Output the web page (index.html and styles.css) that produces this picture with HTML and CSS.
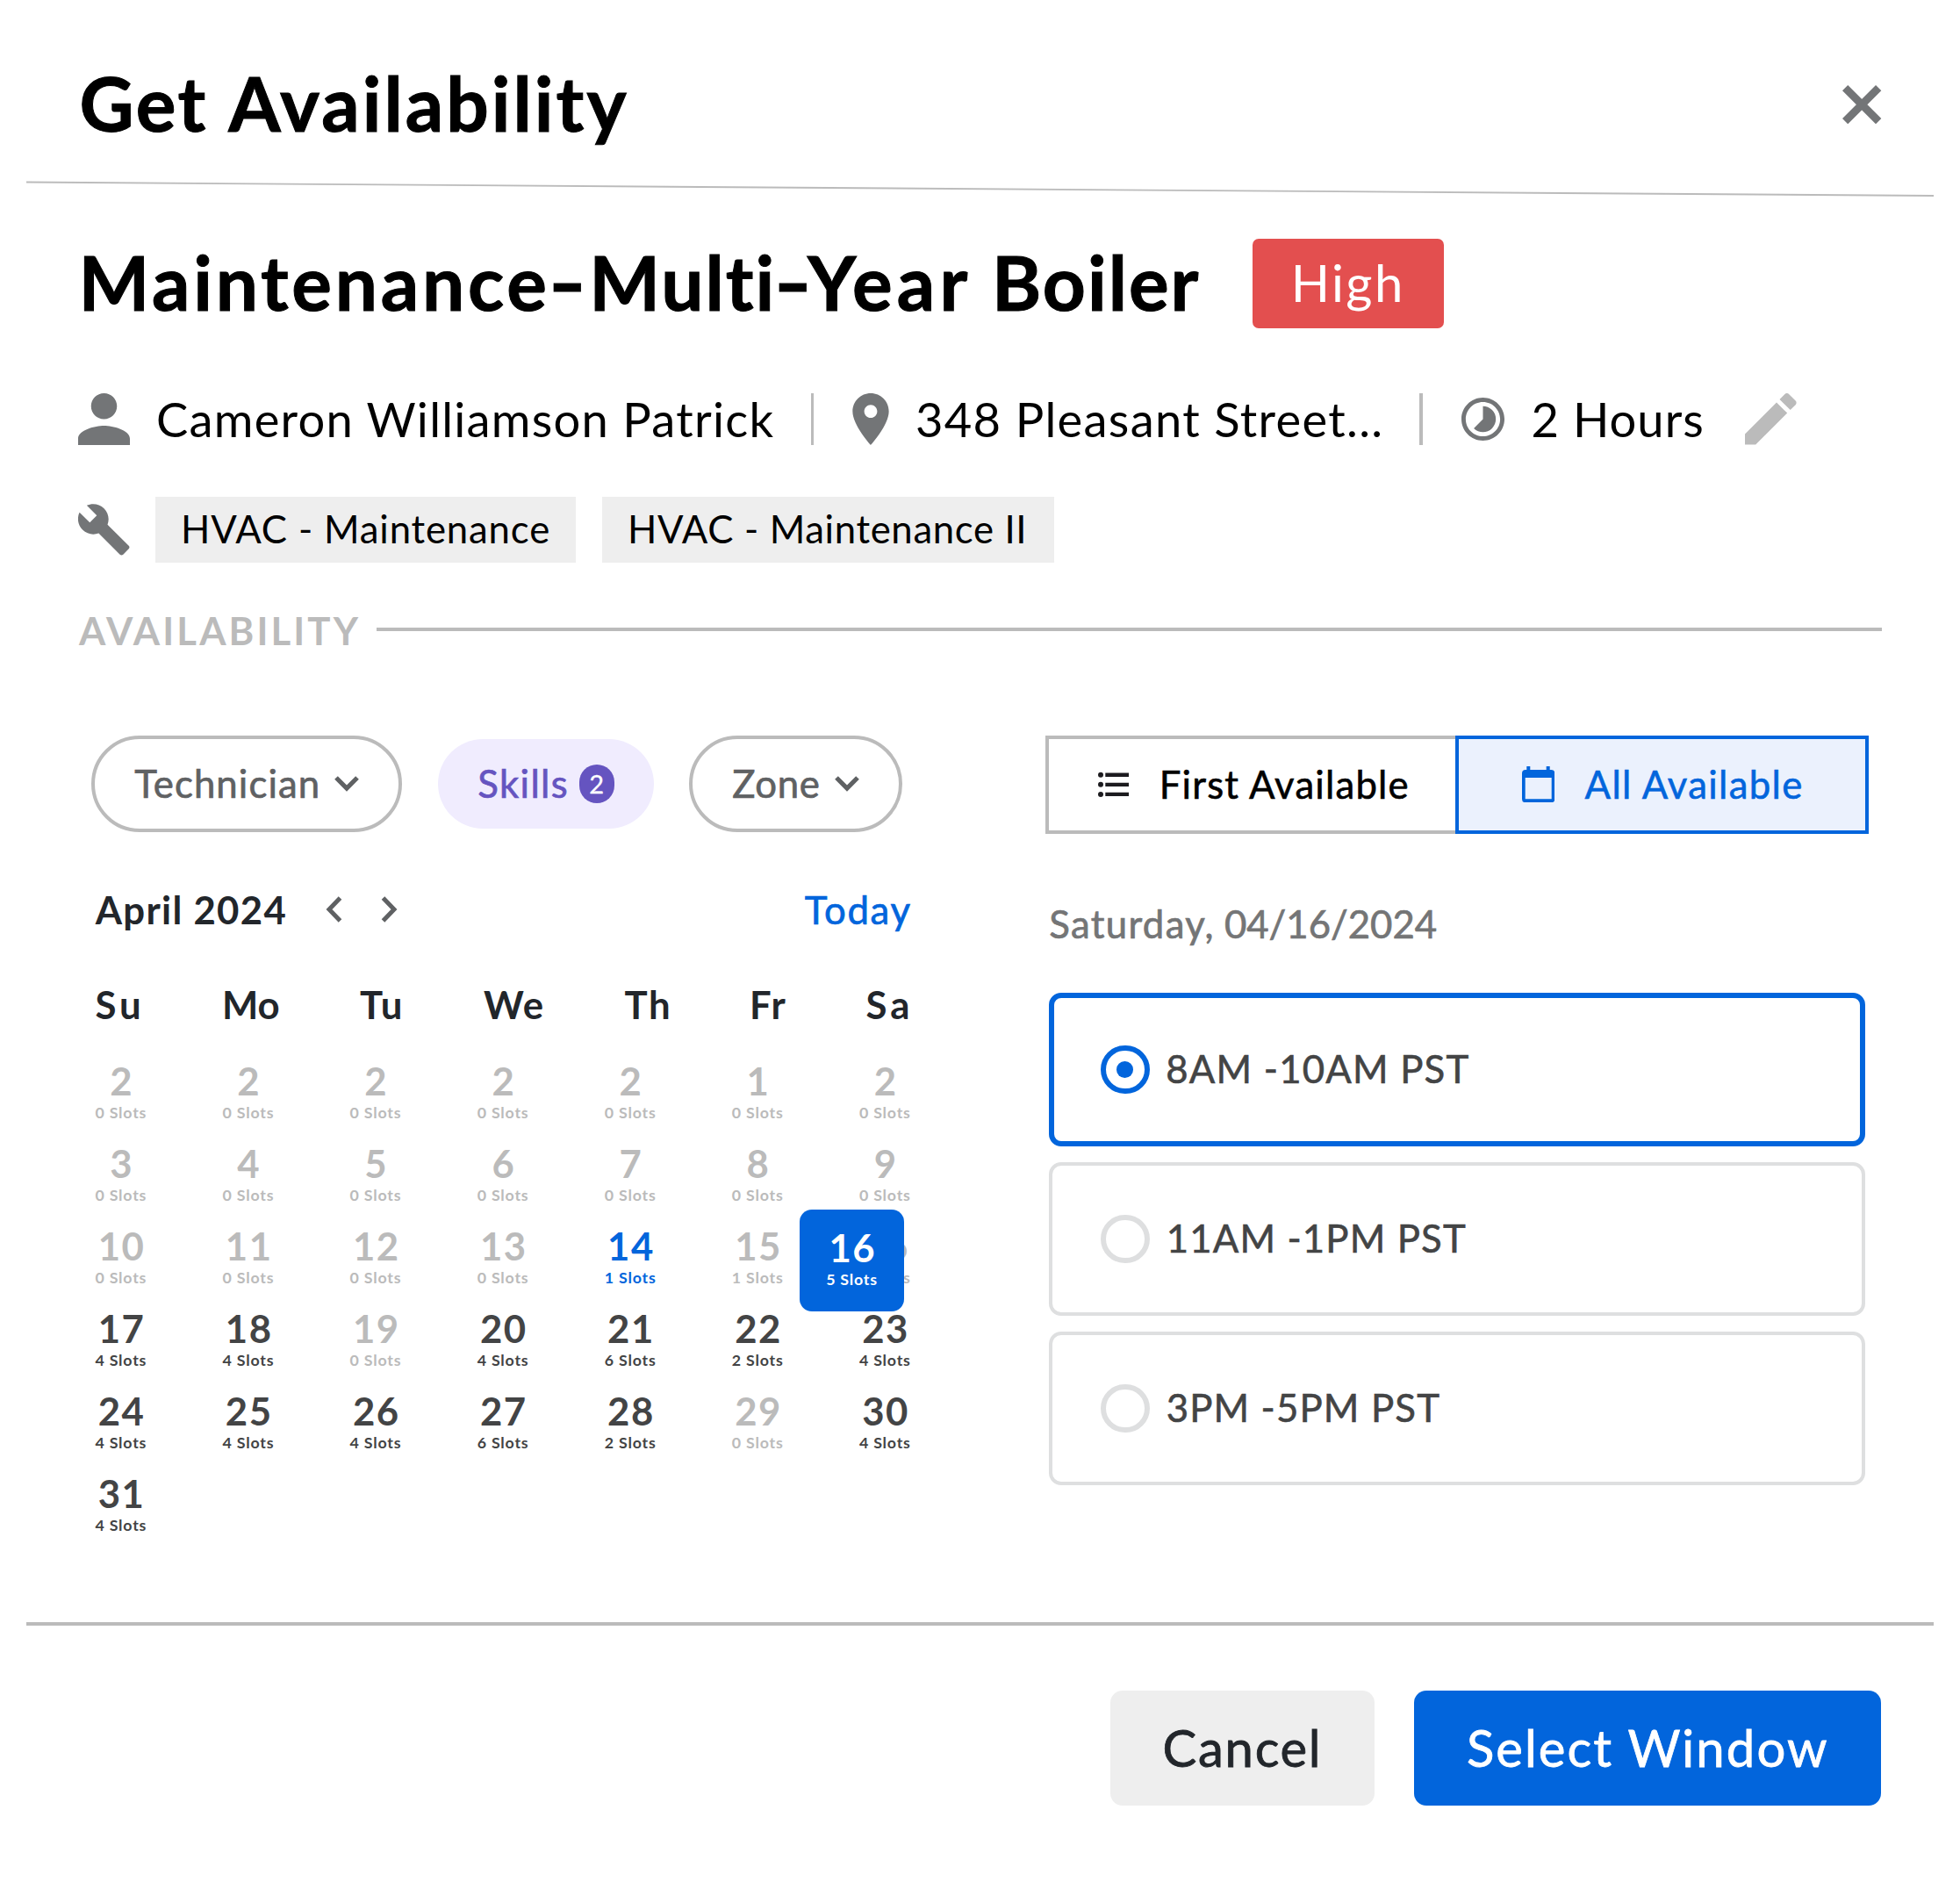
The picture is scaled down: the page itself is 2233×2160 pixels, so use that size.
FILE: index.html
```html
<!DOCTYPE html>
<html lang="en">
<head>
<meta charset="utf-8">
<title>Get Availability</title>
<link rel="stylesheet" href="styles.css">
</head>
<body>
<div class="dialog">
  <header class="dialog-head">
    <h1 class="title">Get <span class="t-avail">Availability</span></h1>
    <svg class="close" viewBox="0 0 44 44"><path d="M3.1 3.1l37.8 37.8M40.9 3.1L3.1 40.9" stroke="#737577" stroke-width="8.8"/></svg>
  </header>
  <svg class="head-rule" viewBox="0 0 2173 18"><path d="M0 1.5L2173 17" stroke="#bbb" stroke-width="1.9"/></svg>

  <section class="job">
    <div class="job-title">
      <h2 class="job-name">Maintenance<span class="hyphen">-</span><span class="n-multi">Multi</span><span class="hyphen before-year">-</span><span class="n-year">Year</span> <span class="n-boiler">Boiler</span></h2>
      <span class="priority">High</span>
    </div>
    <div class="meta">
      <svg class="i-person" viewBox="4 4 16 16"><path d="M12 12c2.21 0 4-1.79 4-4s-1.79-4-4-4-4 1.79-4 4 1.79 4 4 4zm0 2c-2.67 0-8 1.34-8 4v2h16v-2c0-2.66-5.33-4-8-4z"/></svg>
      <span class="meta-text customer">Cameron Williamson Patrick</span>
      <i class="bar"></i>
      <svg class="i-pin" viewBox="5 2 14 20"><path d="M12 2C8.13 2 5 5.13 5 9c0 5.25 7 13 7 13s7-7.75 7-13c0-3.87-3.13-7-7-7zm0 9.5c-1.38 0-2.5-1.12-2.5-2.5s1.12-2.5 2.5-2.5 2.5 1.12 2.5 2.5-1.12 2.5-2.5 2.5z"/></svg>
      <span class="meta-text address">348 Pleasant Street...</span>
      <i class="bar"></i>
      <svg class="i-clock" viewBox="2 2 20 20"><path d="M16.24 7.76C15.07 6.59 13.54 6 12 6v6l-4.24 4.24c2.34 2.34 6.14 2.34 8.49 0 2.34-2.34 2.34-6.14-.01-8.48zM12 2C6.48 2 2 6.48 2 12s4.48 10 10 10 10-4.48 10-10S17.52 2 12 2zm0 18c-4.42 0-8-3.58-8-8s3.58-8 8-8 8 3.58 8 8-3.58 8-8 8z"/></svg>
      <span class="meta-text hours">2 Hours</span>
      <svg class="i-edit" viewBox="3 3 18 18"><path d="M3 17.25V21h3.75L17.81 9.94l-3.75-3.75L3 17.25zM20.71 7.04c.39-.39.39-1.02 0-1.41l-2.34-2.34c-.39-.39-1.02-.39-1.41 0l-1.83 1.83 3.75 3.75 1.83-1.83z"/></svg>
    </div>
    <div class="skills">
      <svg class="i-wrench" viewBox="1 1 22 22"><path d="M22.7 19l-9.1-9.1c.9-2.3.4-5-1.5-6.9-2-2-5-2.4-7.4-1.3L9 6 6 9 1.6 4.7C.4 7.1.9 10.1 2.9 12.1c1.9 1.9 4.6 2.4 6.9 1.5l9.1 9.1c.4.4 1 .4 1.4 0l2.3-2.3c.5-.4.5-1.1.1-1.4z"/></svg>
      <span class="chip chip-a">HVAC - Maintenance</span>
      <span class="chip chip-b">HVAC - Maintenance II</span>
    </div>
    <div class="section-label"><span class="label-text">AVAILABILITY</span><i class="label-rule"></i></div>
  </section>

  <main class="columns">
    <section class="left">
      <div class="filters">
        <div class="pill technician"><span class="pill-text">Technician</span><svg class="chev" viewBox="0 0 30 20"><path d="M3 4l12 12L27 4"/></svg></div>
        <div class="pill-on"><span class="pill-text skills-text">Skills</span><span class="count">2</span></div>
        <div class="pill zone"><span class="pill-text">Zone</span><svg class="chev" viewBox="0 0 30 20"><path d="M3 4l12 12L27 4"/></svg></div>
      </div>
      <div class="month">
        <span class="month-name">April 2024</span>
        <svg class="nav" viewBox="0 0 19 30"><path d="M16.5 2L4 15l12.5 13"/></svg>
        <svg class="nav" viewBox="0 0 19 30"><path d="M2.5 2L15 15 2.5 28"/></svg>
        <span class="today">Today</span>
      </div>
      <div class="weekdays"><span class="wide">Su</span><span class="tight">Mo</span><span>Tu</span><span>We</span><span>Th</span><span>Fr</span><span class="wide">Sa</span></div>
      <div class="days">
        <div class="day"><b>2</b><small>0 Slots</small></div>
        <div class="day"><b>2</b><small>0 Slots</small></div>
        <div class="day"><b>2</b><small>0 Slots</small></div>
        <div class="day"><b>2</b><small>0 Slots</small></div>
        <div class="day"><b>2</b><small>0 Slots</small></div>
        <div class="day"><b>1</b><small>0 Slots</small></div>
        <div class="day"><b>2</b><small>0 Slots</small></div>
        <div class="day"><b>3</b><small>0 Slots</small></div>
        <div class="day"><b>4</b><small>0 Slots</small></div>
        <div class="day"><b>5</b><small>0 Slots</small></div>
        <div class="day"><b>6</b><small>0 Slots</small></div>
        <div class="day"><b>7</b><small>0 Slots</small></div>
        <div class="day"><b>8</b><small>0 Slots</small></div>
        <div class="day"><b>9</b><small>0 Slots</small></div>
        <div class="day"><b>10</b><small>0 Slots</small></div>
        <div class="day"><b>11</b><small>0 Slots</small></div>
        <div class="day"><b>12</b><small>0 Slots</small></div>
        <div class="day"><b>13</b><small>0 Slots</small></div>
        <div class="day now"><b>14</b><small>1 Slots</small></div>
        <div class="day"><b>15</b><small>1 Slots</small></div>
        <div class="day"><b>16</b><small>5 Slots</small><div class="picked"><b>16</b><small>5 Slots</small></div></div>
        <div class="day open"><b>17</b><small>4 Slots</small></div>
        <div class="day open"><b>18</b><small>4 Slots</small></div>
        <div class="day"><b>19</b><small>0 Slots</small></div>
        <div class="day open"><b>20</b><small>4 Slots</small></div>
        <div class="day open"><b>21</b><small>6 Slots</small></div>
        <div class="day open"><b>22</b><small>2 Slots</small></div>
        <div class="day open"><b>23</b><small>4 Slots</small></div>
        <div class="day open"><b>24</b><small>4 Slots</small></div>
        <div class="day open"><b>25</b><small>4 Slots</small></div>
        <div class="day open"><b>26</b><small>4 Slots</small></div>
        <div class="day open"><b>27</b><small>6 Slots</small></div>
        <div class="day open"><b>28</b><small>2 Slots</small></div>
        <div class="day"><b>29</b><small>0 Slots</small></div>
        <div class="day open"><b>30</b><small>4 Slots</small></div>
        <div class="day open"><b>31</b><small>4 Slots</small></div>
      </div>
    </section>

    <section class="right">
      <div class="toggle">
        <div class="tab first">
          <svg class="i-list" viewBox="0 0 35 30"><g fill="#1c1b1f"><circle cx="3" cy="3.7" r="3"/><circle cx="3" cy="14.8" r="3"/><circle cx="3" cy="25.9" r="3"/><path d="M8.3 1.6h26.7v4.3h-26.7zM8.3 12.7h26.7v4.3h-26.7zM8.3 23.8h26.7v4.3h-26.7z"/></g></svg>
          <span>First Available</span>
        </div>
        <div class="tab all">
          <svg class="i-cal" viewBox="0 0 37.3 41.3"><path fill="#0265dc" fill-rule="evenodd" d="M5.3 0h4v4h18.4v-4h4v4h1.6a4 4 0 0 1 4 4v29.3a4 4 0 0 1-4 4h-29.3a4 4 0 0 1-4-4v-29.3a4 4 0 0 1 4-4h1.3zM3.7 13v24.3h30v-24.3z"/></svg>
          <span>All Available</span>
        </div>
      </div>
      <p class="date"><span class="date-day">Saturday,</span> 04/16/2024</p>
      <div class="windows">
        <div class="window on"><i class="radio"></i><span class="w1">8AM -10AM PST</span></div>
        <div class="window"><i class="radio"></i><span class="w2">11AM -1PM PST</span></div>
        <div class="window"><i class="radio"></i><span class="w3">3PM -5PM PST</span></div>
      </div>
    </section>
  </main>

  <footer class="actions">
    <div class="btn cancel">Cancel</div>
    <div class="btn select">Select Window</div>
  </footer>
</div>
</body>
</html>
```
FILE: styles.css
```css
* { box-sizing: border-box; }
body { margin: 0; background: #fff; color: #000; font: 400 43.7px/50px Lato, "Noto Sans", sans-serif; }
svg { display: block; flex: none; fill: none; }
h1, h2, p { margin: 0; font-weight: 700; }
i { display: block; }
.dialog { width: 2233px; height: 2160px; overflow: hidden; white-space: nowrap; }

.dialog-head { display: flex; justify-content: space-between; align-items: center; height: 206px; padding: 26px 89.5px 0 90.5px; }
.title { padding-top: 1px; font-size: 85.5px; line-height: 100px; letter-spacing: 2.6px; -webkit-text-stroke: 1px; }
.t-avail { letter-spacing: 3.05px; }
.close { width: 44.3px; height: 44.3px; margin-top: 6px; }
.head-rule { width: 2173px; height: 18px; margin-left: 30px; }

.job { padding: 48.3px 89.3px 0 89px; }
.job-title { display: flex; align-items: center; height: 101.4px; }
.job-name { width: 1338.3px; padding-bottom: 4.5px; margin-left: .5px; margin-right: -.5px; font-size: 85.5px; line-height: 98px; letter-spacing: 3.79px; -webkit-text-stroke: 1px; }
.hyphen { display: inline-block; margin: 0 5px 0 4px; transform: scaleX(1.35); }
.before-year { margin-right: -4px; }
.n-multi { letter-spacing: 2px; }
.n-year { letter-spacing: 5.2px; }
.n-boiler { margin-left: -2px; letter-spacing: 2px; }
.priority { width: 217.7px; height: 101.4px; padding: 0 0 0 43.5px; border-radius: 7px; background: #e34f4f; color: #fff; font-size: 58px; line-height: 100px; letter-spacing: 2.4px; }

.meta { display: grid; grid-template-columns: 89px 745.5px 47.7px 71.8px 574.5px 47.5px 79.5px 243.5px 58.6px; align-items: center; height: 59px; margin-top: 74.3px; font-size: 54.3px; line-height: 56px; }
.meta-text { padding-bottom: 1px; }
.customer { letter-spacing: 1.26px; }
.address { letter-spacing: 1.32px; }
.hours { letter-spacing: 1.02px; }
.bar { width: 3.6px; height: 59px; background: #bbb; }
.i-person, .i-pin, .i-clock, .i-wrench { fill: #737577; }
.i-person { width: 59px; height: 59px; }
.i-pin { width: 42px; height: 59px; }
.i-clock { width: 49px; height: 49px; }
.i-edit { width: 58.6px; height: 58.6px; fill: #bbb; }

.skills { display: flex; align-items: center; height: 74.2px; margin-top: 59.5px; }
.i-wrench { width: 58.5px; height: 58.5px; margin-right: 29.5px; }
.chip { height: 74.2px; padding-left: 29px; background: #eee; line-height: 73.5px; }
.chip-a { width: 479.3px; margin-right: 29.7px; letter-spacing: .84px; }
.chip-b { width: 515px; letter-spacing: .65px; }

.section-label { display: flex; align-items: center; height: 55px; margin-top: 49.3px; color: #bbb; }
.label-text { width: 340px; padding: 1.5px 0 0 1px; font-weight: 700; letter-spacing: 3.1px; }
.label-rule { flex: 1; height: 4px; background: #bbb; }

.columns { display: flex; justify-content: space-between; height: 1103.2px; padding: 93px 104.2px 0; }
.left { width: 934px; }
.right { width: 937.6px; }

.filters { display: flex; align-items: center; height: 110px; color: #5f6163; -webkit-text-stroke: .7px; }
.pill { display: flex; align-items: center; height: 110px; padding-left: 45px; border: 4px solid #bbb; border-radius: 55px; }
.technician { width: 354px; letter-spacing: 1.1px; }
.zone { width: 242.9px; letter-spacing: .69px; }
.pill-text { padding-bottom: 1px; }
.technician .pill-text { width: 227.3px; }
.zone .pill-text { width: 116px; }
.chev { width: 30px; height: 20px; margin-top: -1px; stroke: #5f6163; stroke-width: 5.2px; }
.pill-on { display: flex; align-items: center; width: 246.2px; height: 102.7px; margin: 0 40.2px 0 40.8px; padding-left: 45.2px; border-radius: 51.4px; background: #f0ecfe; color: #6554c0; }
.skills-text { width: 115.5px; letter-spacing: 1.4px; }
.count { width: 40.2px; height: 44px; border-radius: 20px; background: #6554c0; color: #fff; font-size: 29px; line-height: 43px; text-align: center; -webkit-text-stroke: .3px; }

.month { display: flex; align-items: center; height: 50px; margin-top: 63px; padding-left: 4.5px; }
.month-name { width: 262.8px; color: #22262b; font-weight: 700; letter-spacing: 1.3px; }
.nav { width: 19px; height: 30px; margin: 1px 43.5px 0 0; stroke: #5f6163; stroke-width: 5px; }
.today { margin-left: auto; margin-right: -.5px; color: #0265dc; letter-spacing: 1.7px; -webkit-text-stroke: .7px; }

.weekdays { display: grid; grid-template-columns: 144.5px 157px 141px 160.5px 142.5px 132.5px 54px; margin-top: 57.8px; padding-left: 4.3px; color: #22262b; font-weight: 700; letter-spacing: 1.6px; }
.wide { letter-spacing: 4px; }
.tight { letter-spacing: 0; }

.days { display: grid; grid-template-columns: repeat(7, 59.7px); grid-auto-rows: 73px; gap: 21px 85.4px; margin: 36.8px 0 0 3.8px; color: #bbb; text-align: center; }
.day { position: relative; }
.days b { display: block; height: 50px; margin-right: -1.5px; font-weight: 700; letter-spacing: 1.5px; }
.days small { display: block; margin: .3px -4px 0; font-size: 17.8px; line-height: 23px; font-weight: 700; letter-spacing: .8px; }
.open { color: #434445; }
.now { color: #0265dc; }
.picked { position: absolute; left: -67.9px; top: -15.9px; z-index: 1; width: 119.9px; height: 116.8px; padding-top: 17.9px; border-radius: 14px; background: #0265dc; color: #fff; }

.toggle { display: flex; height: 111.6px; -webkit-text-stroke: .6px; }
.tab { display: flex; align-items: center; padding-bottom: 2px; border: 4px solid #bbb; }
.tab svg { margin-top: 2px; }
.first { width: 467px; padding-left: 55.5px; letter-spacing: 1.2px; border-right: 0; }
.all { width: 470.6px; padding-left: 71.3px; border-color: #0265dc; background: #ebf1fd; color: #0265dc; letter-spacing: 1.32px; }
.i-list { width: 35px; height: 30px; margin-right: 35px; }
.i-cal { width: 37.3px; height: 41.3px; margin-right: 34.8px; }
.date { margin: 77px 0 0 4px; color: #747576; font-weight: 400; -webkit-text-stroke: .7px; }
.date-day { letter-spacing: 1.35px; }

.windows { margin: 54.2px 3.8px 0 3.4px; }
.window { display: flex; align-items: center; height: 174.7px; margin-bottom: 18.3px; padding-left: 55.8px; border: 4px solid #dedfe0; border-radius: 14px; color: #434445; -webkit-text-stroke: .6px; }
.window span { padding-bottom: 2.4px; }
.on { height: 175.3px; padding-left: 53.4px; border: 6px solid #0265dc; }
.radio { display: flex; flex: none; align-items: center; justify-content: center; width: 55.6px; height: 55.6px; margin-right: 18.7px; border: 6px solid #dedfe0; border-radius: 50%; }
.on .radio { border-color: #0265dc; }
.on .radio::after { content: ""; width: 18.7px; height: 18.7px; border-radius: 50%; background: #0265dc; }
.w1 { letter-spacing: 1.2px; }
.w2 { letter-spacing: 1.15px; }
.w3 { letter-spacing: 1.15px; }

.actions { display: flex; justify-content: flex-end; margin: 0 30px; padding: 74px 59.6px 0 0; border-top: 4px solid #bbb; font-size: 58px; line-height: 129.2px; -webkit-text-stroke: .8px; }
.btn { height: 130.8px; border-radius: 14px; }
.cancel { width: 301.8px; margin-right: 44.5px; padding-left: 60px; background: #eee; color: #22262b; letter-spacing: 1.7px; }
.select { width: 532.5px; padding-left: 60px; background: #0265dc; color: #fff; letter-spacing: 2.1px; }
```
